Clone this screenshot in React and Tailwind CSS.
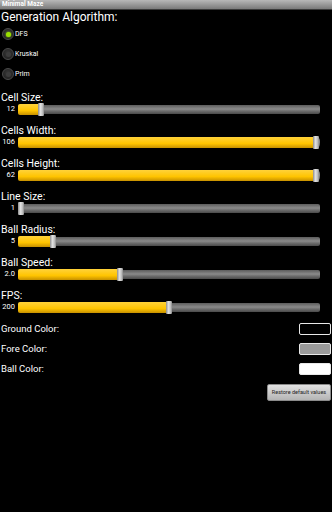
import React from 'react';

const sliders = [
  { label: 'Cell Size:', value: '12', pos: 23 },
  { label: 'Cells Width:', value: '106', pos: 298 },
  { label: 'Cells Height:', value: '62', pos: 298 },
  { label: 'Line Size:', value: '1', pos: 3 },
  { label: 'Ball Radius:', value: '5', pos: 35 },
  { label: 'Ball Speed:', value: '2.0', pos: 102 },
  { label: 'FPS:', value: '200', pos: 151 },
];

const algorithms = [
  { name: 'DFS', checked: true },
  { name: 'Kruskal', checked: false },
  { name: 'Prim', checked: false },
];

const colors = [
  { label: 'Ground Color:', swatch: 'bg-black' },
  { label: 'Fore Color:', swatch: 'bg-[#9a9a9a]' },
  { label: 'Ball Color:', swatch: 'bg-white' },
];

function Radio({ checked }) {
  return (
    <div className="w-[12px] h-[12px] rounded-full bg-[radial-gradient(circle_at_50%_40%,#3a3a3a,#1a1a1a)] border border-[#4a4a4a] flex items-center justify-center">
      <div
        className={
          checked
            ? 'w-[5px] h-[5px] rounded-full bg-[#9ae000] shadow-[0_0_2px_#9ae000]'
            : 'w-[5px] h-[5px] rounded-full bg-[#3c3c3c]'
        }
      />
    </div>
  );
}

function Slider({ label, value, pos }) {
  return (
    <div className="flex flex-col h-[22px]">
      <div className="h-[12px] text-[10.5px] leading-[12px] text-white pl-[1px]">{label}</div>
      <div className="flex items-center h-[10px]">
        <div className="w-[16px] text-right text-[7.5px] leading-[10px] text-white pr-[1px]">{value}</div>
        <div className="relative flex-1 ml-[2px] mr-[12px] h-[9px] rounded-[2px] bg-[linear-gradient(to_bottom,#5c5c5c,#8a8a8a_45%,#6a6a6a_70%,#4a4a4a)]">
          {/* filled part */}
          <div
            className="absolute left-0 top-[-1px] bottom-[-1px] rounded-l-[2px] bg-[linear-gradient(to_bottom,#ffd23a,#ffc400_60%,#c69000)]"
            style={{ width: pos + 3 }}
          />
          {/* thumb */}
          <div
            className="absolute top-[-2px] w-[6px] h-[13px] rounded-[1px] bg-[linear-gradient(to_right,#8c8c8c,#e0e0e0_40%,#c8c8c8_70%,#8c8c8c)]"
            style={{ left: pos - 3 }}
          />
        </div>
      </div>
    </div>
  );
}

export default function App() {
  return (
    <div className="w-[332px] h-[512px] bg-black overflow-hidden font-['Roboto',sans-serif] text-white">
      {/* title bar */}
      <div className="h-[10px] bg-[linear-gradient(to_bottom,#b8b8b8,#7a7a7a)] border-b border-[#3a3a3a] flex items-center pl-[2px]">
        <span className="text-[6.5px] font-bold leading-none text-white">Minimal Maze</span>
      </div>

      <div className="h-[13px] text-[12px] leading-[13px] pl-[1px] mt-[1px]">Generation Algorithm:</div>

      <div className="flex flex-col">
        {algorithms.map((a) => (
          <div key={a.name} className="h-[20px] flex items-center pl-[2px] gap-[1px]">
            <Radio checked={a.checked} />
            <span className="text-[7px] leading-none">{a.name}</span>
          </div>
        ))}
      </div>

      <div className="flex flex-col gap-[11px] mt-[8px]">
        {sliders.map((s) => (
          <Slider key={s.label} {...s} />
        ))}
      </div>

      <div className="flex flex-col mt-[7px]">
        {colors.map((c) => (
          <div key={c.label} className="h-[20px] flex items-center justify-between pl-[1px] pr-[1px]">
            <span className="text-[9.5px] leading-none">{c.label}</span>
            <div className={`w-[32px] h-[12px] rounded-[2px] border border-[#e8e8e8] ${c.swatch}`} />
          </div>
        ))}
      </div>

      <div className="flex justify-end mt-[5px] pr-[1px]">
        <button className="w-[64px] h-[17px] rounded-[2px] bg-[linear-gradient(to_bottom,#e2e2e2,#b4b4b4)] border border-[#8a8a8a] text-[5.5px] leading-none text-[#222] whitespace-nowrap">
          Restore default values
        </button>
      </div>
    </div>
  );
}
